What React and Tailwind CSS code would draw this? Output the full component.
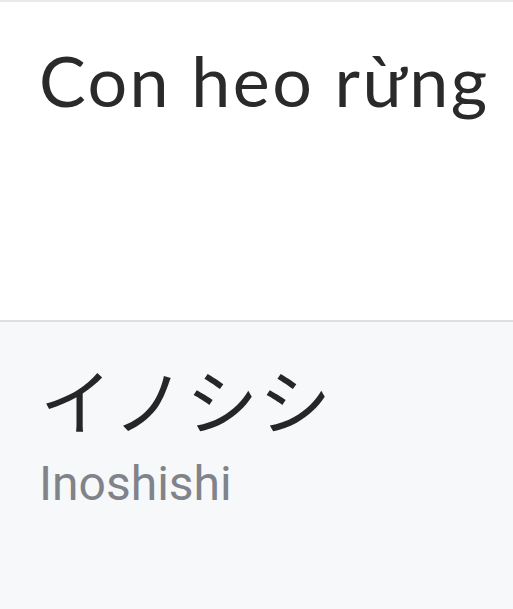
import React from "react";

export default function App() {
    return (
        <div className="w-[513px] h-[609px] flex flex-col bg-[#f7f8fa] border-t-2 border-[#e9e9eb]">
            {/* question side */}
            <div className="h-[320px] bg-white px-10 pt-[36px] border-b-2 border-[#dcdee3]">
                <h1 className="text-[70px] leading-[1.2] whitespace-nowrap text-[#2a2a2a] font-['Lato',sans-serif] tracking-[2.4px] -ml-[1px]">
                    Con heo rừng
                </h1>
            </div>

            {/* answer side */}
            <div className="flex flex-col px-10 pt-[40px]">
                <div className="text-[72px] leading-none whitespace-nowrap text-[#262626] font-['Noto_Sans_CJK_JP',sans-serif] tracking-[1px]">
                    イノシシ
                </div>
                <div className="text-[48px] leading-none whitespace-nowrap text-[#808389] font-['Roboto',sans-serif] mt-[26px] -ml-[1px]">
                    Inoshishi
                </div>
            </div>
        </div>
    );
}
